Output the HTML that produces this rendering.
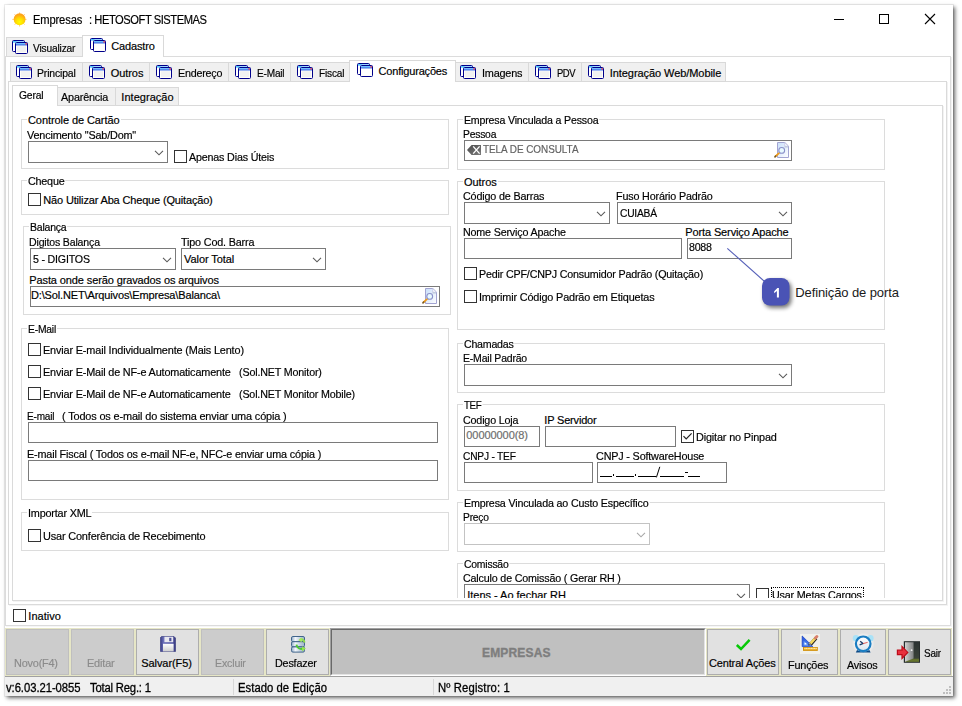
<!DOCTYPE html>
<html><head><meta charset="utf-8"><title>Empresas : HETOSOFT SISTEMAS</title>
<style>
html,body{margin:0;padding:0;background:#fff;}
body{width:962px;height:706px;position:relative;overflow:hidden;font-family:"Liberation Sans",sans-serif;}
.t{position:absolute;white-space:pre;font-family:"Liberation Sans",sans-serif;-webkit-text-stroke:.18px currentColor;}
#win{position:absolute;left:5px;top:5px;width:948px;height:691px;background:#fff;box-shadow:0 0 0 1px rgba(0,0,0,.06),2px 2px 4px rgba(0,0,0,.6);}
#clip{position:absolute;left:0;top:0;width:962px;height:598px;overflow:hidden;}
.tab{position:absolute;box-sizing:border-box;border:1px solid #d9d9d9;background:#f0f0f0;}
.tab.sel{background:#fff;border-bottom:none;}
.pane{position:absolute;box-sizing:border-box;border:1px solid #dadada;background:#fff;}
.btn{position:absolute;box-sizing:border-box;border:1px solid #adadad;background:#e1e1e1;}
.btn.dis{border-color:#bfbfbf;background:#cccccc;}
</style></head><body>
<div id="win"></div>

<svg style="position:absolute;left:11px;top:11px" width="17" height="17" viewBox="0 0 17 17">
<defs><radialGradient id="sun" cx=".5" cy=".72" r=".62"><stop offset="0" stop-color="#ffff00"/><stop offset=".45" stop-color="#ffe000"/><stop offset="1" stop-color="#ffa31a"/></radialGradient></defs>
<g stroke="#ffab2e" stroke-width="1" stroke-linecap="round" opacity=".55">
<path d="M8.6 1.7 V2.6 M8.6 14.4 V15.2 M1.6 8.4 H2.4 M14.6 8.4 H15.2 M3.7 3.5 L4.3 4.1 M12.9 12.8 L13.4 13.3 M13.6 3.4 L13 4 M4.4 12.9 L3.9 13.5"/></g>
<circle cx="8.6" cy="8.3" r="5.95" fill="url(#sun)"/>
</svg>
<span id="t1" class="t " style="left:33px;top:13px;font-size:12px;line-height:14px;color:#000;letter-spacing:-0.146px;transform:scaleX(0.9300);transform-origin:0 0;">Empresas</span>
<span id="t2" class="t " style="left:89px;top:13px;font-size:12px;line-height:14px;color:#000;letter-spacing:-0.484px;transform:scaleX(0.9300);transform-origin:0 0;">: HETOSOFT SISTEMAS</span>
<svg style="position:absolute;left:830px;top:10px" width="115" height="20" viewBox="0 0 115 20">
<path d="M4 9.5 H14" stroke="#000" stroke-width="1"/>
<rect x="49.5" y="4.5" width="9" height="9" fill="none" stroke="#000" stroke-width="1"/>
<path d="M95 4 L105 14 M105 4 L95 14" stroke="#000" stroke-width="1.1"/>
</svg>
<div class="pane" style="left:5px;top:56px;width:946px;height:570px;border-color:#dcdcdc"></div>
<div style="position:absolute;left:951px;top:57px;width:1px;height:569px;background:#f2f2f2"></div>
<div class="tab" style="left:6px;top:37px;width:77px;height:20px;"></div>
<div class="tab sel" style="left:82px;top:35px;width:82px;height:22px;"></div>
<svg style="position:absolute;left:12px;top:40px" width="16" height="14" viewBox="0 0 16 14">
<rect x=".5" y=".5" width="12" height="11" rx="1" fill="#ffffff" stroke="#00008b"/>
<rect x="1" y="1" width="11" height="1.5" fill="#9fd6ff"/>
<rect x="1" y="1" width="3.5" height="1.5" fill="#52c8ff"/>
<rect x="3.5" y="2.5" width="12" height="11" rx="1" fill="#fffef8" stroke="#00008b"/>
<rect x="4" y="3" width="11" height="1.2" fill="#6ec2ff"/>
<rect x="4" y="4.2" width="11" height="1.2" fill="#2f6cea"/>
<rect x="4" y="5.4" width="11" height=".5" fill="#8eaaf2"/>
<rect x="13.4" y="3.1" width="1.5" height="1.5" fill="#f0384c"/>
<rect x="5" y="6.2" width="9" height="5.8" fill="#f1f1f1"/>
</svg>
<span id="t3" class="t " style="left:33.3px;top:42px;font-size:11px;line-height:13px;color:#000;letter-spacing:-0.171px;transform:scaleX(0.9247);transform-origin:0 0;">Visualizar</span>
<svg style="position:absolute;left:90px;top:38px" width="16" height="14" viewBox="0 0 16 14">
<rect x=".5" y=".5" width="12" height="11" rx="1" fill="#ffffff" stroke="#00008b"/>
<rect x="1" y="1" width="11" height="1.5" fill="#9fd6ff"/>
<rect x="1" y="1" width="3.5" height="1.5" fill="#52c8ff"/>
<rect x="3.5" y="2.5" width="12" height="11" rx="1" fill="#fffef8" stroke="#00008b"/>
<rect x="4" y="3" width="11" height="1.2" fill="#6ec2ff"/>
<rect x="4" y="4.2" width="11" height="1.2" fill="#2f6cea"/>
<rect x="4" y="5.4" width="11" height=".5" fill="#8eaaf2"/>
<rect x="13.4" y="3.1" width="1.5" height="1.5" fill="#f0384c"/>
<rect x="5" y="6.2" width="9" height="5.8" fill="#ffffff"/>
</svg>
<span id="t4" class="t " style="left:111.3px;top:40px;font-size:11px;line-height:13px;color:#000;letter-spacing:-0.163px;">Cadastro</span>
<div class="pane" style="left:8px;top:81px;width:939px;height:524px;"></div>
<div style="position:absolute;left:947px;top:82px;width:1px;height:523px;background:#f2f2f2"></div>
<div class="tab" style="left:10px;top:62px;width:73px;height:20px;"></div>
<svg style="position:absolute;left:16px;top:65px" width="16" height="14" viewBox="0 0 16 14">
<rect x=".5" y=".5" width="12" height="11" rx="1" fill="#ffffff" stroke="#00008b"/>
<rect x="1" y="1" width="11" height="1.5" fill="#9fd6ff"/>
<rect x="1" y="1" width="3.5" height="1.5" fill="#52c8ff"/>
<rect x="3.5" y="2.5" width="12" height="11" rx="1" fill="#fffef8" stroke="#00008b"/>
<rect x="4" y="3" width="11" height="1.2" fill="#6ec2ff"/>
<rect x="4" y="4.2" width="11" height="1.2" fill="#2f6cea"/>
<rect x="4" y="5.4" width="11" height=".5" fill="#8eaaf2"/>
<rect x="13.4" y="3.1" width="1.5" height="1.5" fill="#f0384c"/>
<rect x="5" y="6.2" width="9" height="5.8" fill="#f1f1f1"/>
</svg>
<span id="t5" class="t " style="left:37.3px;top:67px;font-size:11px;line-height:13px;color:#000;letter-spacing:-0.167px;transform:scaleX(0.9497);transform-origin:0 0;">Principal</span>
<div class="tab" style="left:82px;top:62px;width:68px;height:20px;"></div>
<svg style="position:absolute;left:89px;top:65px" width="16" height="14" viewBox="0 0 16 14">
<rect x=".5" y=".5" width="12" height="11" rx="1" fill="#ffffff" stroke="#00008b"/>
<rect x="1" y="1" width="11" height="1.5" fill="#9fd6ff"/>
<rect x="1" y="1" width="3.5" height="1.5" fill="#52c8ff"/>
<rect x="3.5" y="2.5" width="12" height="11" rx="1" fill="#fffef8" stroke="#00008b"/>
<rect x="4" y="3" width="11" height="1.2" fill="#6ec2ff"/>
<rect x="4" y="4.2" width="11" height="1.2" fill="#2f6cea"/>
<rect x="4" y="5.4" width="11" height=".5" fill="#8eaaf2"/>
<rect x="13.4" y="3.1" width="1.5" height="1.5" fill="#f0384c"/>
<rect x="5" y="6.2" width="9" height="5.8" fill="#f1f1f1"/>
</svg>
<span id="t6" class="t " style="left:110.8px;top:67px;font-size:11px;line-height:13px;color:#000;letter-spacing:-0.083px;">Outros</span>
<div class="tab" style="left:149px;top:62px;width:80px;height:20px;"></div>
<svg style="position:absolute;left:156px;top:65px" width="16" height="14" viewBox="0 0 16 14">
<rect x=".5" y=".5" width="12" height="11" rx="1" fill="#ffffff" stroke="#00008b"/>
<rect x="1" y="1" width="11" height="1.5" fill="#9fd6ff"/>
<rect x="1" y="1" width="3.5" height="1.5" fill="#52c8ff"/>
<rect x="3.5" y="2.5" width="12" height="11" rx="1" fill="#fffef8" stroke="#00008b"/>
<rect x="4" y="3" width="11" height="1.2" fill="#6ec2ff"/>
<rect x="4" y="4.2" width="11" height="1.2" fill="#2f6cea"/>
<rect x="4" y="5.4" width="11" height=".5" fill="#8eaaf2"/>
<rect x="13.4" y="3.1" width="1.5" height="1.5" fill="#f0384c"/>
<rect x="5" y="6.2" width="9" height="5.8" fill="#f1f1f1"/>
</svg>
<span id="t7" class="t " style="left:177.8px;top:67px;font-size:11px;line-height:13px;color:#000;letter-spacing:-0.207px;transform:scaleX(0.9749);transform-origin:0 0;">Endereço</span>
<div class="tab" style="left:228px;top:62px;width:63px;height:20px;"></div>
<svg style="position:absolute;left:235px;top:65px" width="16" height="14" viewBox="0 0 16 14">
<rect x=".5" y=".5" width="12" height="11" rx="1" fill="#ffffff" stroke="#00008b"/>
<rect x="1" y="1" width="11" height="1.5" fill="#9fd6ff"/>
<rect x="1" y="1" width="3.5" height="1.5" fill="#52c8ff"/>
<rect x="3.5" y="2.5" width="12" height="11" rx="1" fill="#fffef8" stroke="#00008b"/>
<rect x="4" y="3" width="11" height="1.2" fill="#6ec2ff"/>
<rect x="4" y="4.2" width="11" height="1.2" fill="#2f6cea"/>
<rect x="4" y="5.4" width="11" height=".5" fill="#8eaaf2"/>
<rect x="13.4" y="3.1" width="1.5" height="1.5" fill="#f0384c"/>
<rect x="5" y="6.2" width="9" height="5.8" fill="#f1f1f1"/>
</svg>
<span id="t8" class="t " style="left:256.5px;top:67px;font-size:11px;line-height:13px;color:#000;letter-spacing:-0.204px;transform:scaleX(0.9154);transform-origin:0 0;">E-Mail</span>
<div class="tab" style="left:290px;top:62px;width:62px;height:20px;"></div>
<svg style="position:absolute;left:297px;top:65px" width="16" height="14" viewBox="0 0 16 14">
<rect x=".5" y=".5" width="12" height="11" rx="1" fill="#ffffff" stroke="#00008b"/>
<rect x="1" y="1" width="11" height="1.5" fill="#9fd6ff"/>
<rect x="1" y="1" width="3.5" height="1.5" fill="#52c8ff"/>
<rect x="3.5" y="2.5" width="12" height="11" rx="1" fill="#fffef8" stroke="#00008b"/>
<rect x="4" y="3" width="11" height="1.2" fill="#6ec2ff"/>
<rect x="4" y="4.2" width="11" height="1.2" fill="#2f6cea"/>
<rect x="4" y="5.4" width="11" height=".5" fill="#8eaaf2"/>
<rect x="13.4" y="3.1" width="1.5" height="1.5" fill="#f0384c"/>
<rect x="5" y="6.2" width="9" height="5.8" fill="#f1f1f1"/>
</svg>
<span id="t9" class="t " style="left:318.6px;top:67px;font-size:11px;line-height:13px;color:#000;letter-spacing:-0.188px;transform:scaleX(0.9174);transform-origin:0 0;">Fiscal</span>
<div class="tab" style="left:453px;top:62px;width:76px;height:20px;"></div>
<svg style="position:absolute;left:460px;top:65px" width="16" height="14" viewBox="0 0 16 14">
<rect x=".5" y=".5" width="12" height="11" rx="1" fill="#ffffff" stroke="#00008b"/>
<rect x="1" y="1" width="11" height="1.5" fill="#9fd6ff"/>
<rect x="1" y="1" width="3.5" height="1.5" fill="#52c8ff"/>
<rect x="3.5" y="2.5" width="12" height="11" rx="1" fill="#fffef8" stroke="#00008b"/>
<rect x="4" y="3" width="11" height="1.2" fill="#6ec2ff"/>
<rect x="4" y="4.2" width="11" height="1.2" fill="#2f6cea"/>
<rect x="4" y="5.4" width="11" height=".5" fill="#8eaaf2"/>
<rect x="13.4" y="3.1" width="1.5" height="1.5" fill="#f0384c"/>
<rect x="5" y="6.2" width="9" height="5.8" fill="#f1f1f1"/>
</svg>
<span id="t10" class="t " style="left:481.8px;top:67px;font-size:11px;line-height:13px;color:#000;letter-spacing:-0.213px;transform:scaleX(0.9896);transform-origin:0 0;">Imagens</span>
<div class="tab" style="left:528px;top:62px;width:54px;height:20px;"></div>
<svg style="position:absolute;left:535px;top:65px" width="16" height="14" viewBox="0 0 16 14">
<rect x=".5" y=".5" width="12" height="11" rx="1" fill="#ffffff" stroke="#00008b"/>
<rect x="1" y="1" width="11" height="1.5" fill="#9fd6ff"/>
<rect x="1" y="1" width="3.5" height="1.5" fill="#52c8ff"/>
<rect x="3.5" y="2.5" width="12" height="11" rx="1" fill="#fffef8" stroke="#00008b"/>
<rect x="4" y="3" width="11" height="1.2" fill="#6ec2ff"/>
<rect x="4" y="4.2" width="11" height="1.2" fill="#2f6cea"/>
<rect x="4" y="5.4" width="11" height=".5" fill="#8eaaf2"/>
<rect x="13.4" y="3.1" width="1.5" height="1.5" fill="#f0384c"/>
<rect x="5" y="6.2" width="9" height="5.8" fill="#f1f1f1"/>
</svg>
<span id="t11" class="t " style="left:556.6999999999999px;top:67px;font-size:11px;line-height:13px;color:#000;letter-spacing:-0.557px;transform:scaleX(0.8600);transform-origin:0 0;">PDV</span>
<div class="tab" style="left:581px;top:62px;width:145px;height:20px;"></div>
<svg style="position:absolute;left:588px;top:65px" width="16" height="14" viewBox="0 0 16 14">
<rect x=".5" y=".5" width="12" height="11" rx="1" fill="#ffffff" stroke="#00008b"/>
<rect x="1" y="1" width="11" height="1.5" fill="#9fd6ff"/>
<rect x="1" y="1" width="3.5" height="1.5" fill="#52c8ff"/>
<rect x="3.5" y="2.5" width="12" height="11" rx="1" fill="#fffef8" stroke="#00008b"/>
<rect x="4" y="3" width="11" height="1.2" fill="#6ec2ff"/>
<rect x="4" y="4.2" width="11" height="1.2" fill="#2f6cea"/>
<rect x="4" y="5.4" width="11" height=".5" fill="#8eaaf2"/>
<rect x="13.4" y="3.1" width="1.5" height="1.5" fill="#f0384c"/>
<rect x="5" y="6.2" width="9" height="5.8" fill="#f1f1f1"/>
</svg>
<span id="t12" class="t " style="left:609.8px;top:67px;font-size:11px;line-height:13px;color:#000;letter-spacing:-0.071px;">Integração Web/Mobile</span>
<div class="tab sel" style="left:349px;top:60px;width:107px;height:22px;"></div>
<svg style="position:absolute;left:357px;top:63px" width="16" height="14" viewBox="0 0 16 14">
<rect x=".5" y=".5" width="12" height="11" rx="1" fill="#ffffff" stroke="#00008b"/>
<rect x="1" y="1" width="11" height="1.5" fill="#9fd6ff"/>
<rect x="1" y="1" width="3.5" height="1.5" fill="#52c8ff"/>
<rect x="3.5" y="2.5" width="12" height="11" rx="1" fill="#fffef8" stroke="#00008b"/>
<rect x="4" y="3" width="11" height="1.2" fill="#6ec2ff"/>
<rect x="4" y="4.2" width="11" height="1.2" fill="#2f6cea"/>
<rect x="4" y="5.4" width="11" height=".5" fill="#8eaaf2"/>
<rect x="13.4" y="3.1" width="1.5" height="1.5" fill="#f0384c"/>
<rect x="5" y="6.2" width="9" height="5.8" fill="#ffffff"/>
</svg>
<span id="t13" class="t " style="left:378.6px;top:65px;font-size:11px;line-height:13px;color:#000;letter-spacing:-0.186px;">Configurações</span>
<div class="pane" style="left:12px;top:105px;width:931px;height:496px;"></div>
<div style="position:absolute;left:943px;top:106px;width:1px;height:495px;background:#f2f2f2"></div>
<div class="tab" style="left:57px;top:87px;width:59px;height:19px;"></div>
<div class="tab" style="left:115px;top:87px;width:64px;height:19px;"></div>
<div class="tab sel" style="left:12px;top:85px;width:46px;height:21px;"></div>
<span id="t14" class="t " style="left:19.3px;top:89px;font-size:11px;line-height:13px;color:#000;letter-spacing:-0.215px;transform:scaleX(0.9406);transform-origin:0 0;">Geral</span>
<span id="t15" class="t " style="left:61.3px;top:91px;font-size:11px;line-height:13px;color:#000;letter-spacing:-0.189px;transform:scaleX(0.9847);transform-origin:0 0;">Aparência</span>
<span id="t16" class="t " style="left:121.3px;top:91px;font-size:11px;line-height:13px;color:#000;letter-spacing:0.035px;">Integração</span>
<div style="position:absolute;left:13px;top:601px;width:931px;height:1px;background:#f4f4f4;"></div>
<div style="position:absolute;left:9px;top:605px;width:939px;height:1px;background:#f4f4f4;"></div>
<div style="position:absolute;left:6px;top:626px;width:946px;height:1px;background:#f6f6f6;"></div>
<div id="clip">
<div style="position:absolute;left:21px;top:119px;width:426px;height:48px;border:1px solid #dcdcdc;"></div>
<span id="t17" class="t " style="left:28.0px;top:114px;font-size:11px;line-height:13px;color:#000;letter-spacing:-0.080px;background:#fff;padding:0 1px 0 1px;margin-left:-1px;">Controle de Cartão</span>
<span id="t18" class="t " style="left:27.3px;top:129px;font-size:11px;line-height:13px;color:#000;letter-spacing:-0.183px;transform:scaleX(0.9862);transform-origin:0 0;">Vencimento &quot;Sab/Dom&quot;</span>
<div style="position:absolute;left:28px;top:141px;width:138px;height:20px;border:1px solid #7a7a7a;background:#fff;"><svg width="10" height="6" viewBox="0 0 10 6" style="position:absolute;right:3px;top:8px"><path d="M1 .8 L5 4.8 L9 .8" fill="none" stroke="#5a5a5a" stroke-width="1.1"/></svg></div>
<div style="position:absolute;left:174px;top:150px;width:11px;height:11px;border:1px solid #333;background:#fff;"></div>
<span id="t19" class="t " style="left:189.3px;top:151px;font-size:11px;line-height:13px;color:#000;letter-spacing:-0.174px;transform:scaleX(0.9736);transform-origin:0 0;">Apenas Dias Úteis</span>
<div style="position:absolute;left:21px;top:180px;width:426px;height:33px;border:1px solid #dcdcdc;"></div>
<span id="t20" class="t " style="left:28.0px;top:175px;font-size:11px;line-height:13px;color:#000;letter-spacing:-0.235px;transform:scaleX(0.9821);transform-origin:0 0;background:#fff;padding:0 1px 0 1px;margin-left:-1px;">Cheque</span>
<div style="position:absolute;left:28px;top:193px;width:11px;height:11px;border:1px solid #333;background:#fff;"></div>
<span id="t21" class="t " style="left:43.3px;top:194px;font-size:11px;line-height:13px;color:#000;letter-spacing:-0.163px;">Não Utilizar Aba Cheque (Quitação)</span>
<div style="position:absolute;left:23px;top:226px;width:426px;height:87px;border:1px solid #dcdcdc;"></div>
<span id="t22" class="t " style="left:30.0px;top:221px;font-size:11px;line-height:13px;color:#000;letter-spacing:-0.209px;transform:scaleX(0.9529);transform-origin:0 0;background:#fff;padding:0 1px 0 1px;margin-left:-1px;">Balança</span>
<span id="t23" class="t " style="left:29.3px;top:236px;font-size:11px;line-height:13px;color:#000;letter-spacing:-0.171px;transform:scaleX(0.9589);transform-origin:0 0;">Digitos Balança</span>
<div style="position:absolute;left:30px;top:248px;width:144px;height:20px;border:1px solid #7a7a7a;background:#fff;"><svg width="10" height="6" viewBox="0 0 10 6" style="position:absolute;right:3px;top:8px"><path d="M1 .8 L5 4.8 L9 .8" fill="none" stroke="#5a5a5a" stroke-width="1.1"/></svg></div>
<span id="t24" class="t " style="left:33.3px;top:253px;font-size:11px;line-height:13px;color:#000;letter-spacing:-0.189px;transform:scaleX(0.9656);transform-origin:0 0;">5 - DIGITOS</span>
<span id="t25" class="t " style="left:180.8px;top:236px;font-size:11px;line-height:13px;color:#000;letter-spacing:-0.169px;transform:scaleX(0.9815);transform-origin:0 0;">Tipo Cod. Barra</span>
<div style="position:absolute;left:181px;top:248px;width:143px;height:20px;border:1px solid #7a7a7a;background:#fff;"><svg width="10" height="6" viewBox="0 0 10 6" style="position:absolute;right:3px;top:8px"><path d="M1 .8 L5 4.8 L9 .8" fill="none" stroke="#5a5a5a" stroke-width="1.1"/></svg></div>
<span id="t26" class="t " style="left:184.0px;top:253px;font-size:11px;line-height:13px;color:#000;letter-spacing:-0.067px;">Valor Total</span>
<span id="t27" class="t " style="left:29.3px;top:274px;font-size:11px;line-height:13px;color:#000;letter-spacing:-0.115px;">Pasta onde serão gravados os arquivos</span>
<div style="position:absolute;left:30px;top:286px;width:408px;height:19px;border:1px solid #7a7a7a;background:#fff;"></div>
<span id="t28" class="t " style="left:30.900000000000002px;top:289px;font-size:11px;line-height:13px;color:#000;letter-spacing:-0.132px;">D:\Sol.NET\Arquivos\Empresa\Balanca\</span>
<svg style="position:absolute;left:422px;top:288px" width="16" height="17" viewBox="0 0 16 17">
<defs><linearGradient id="pg" x1="0" y1="0" x2="1" y2="1"><stop offset="0" stop-color="#c9e0fb"/><stop offset=".55" stop-color="#e6effc"/><stop offset="1" stop-color="#ffffff"/></linearGradient>
<linearGradient id="fd" x1="0" y1="0" x2="0" y2="1"><stop offset="0" stop-color="#9fb0c0"/><stop offset="1" stop-color="#e6effc" stop-opacity="0"/></linearGradient></defs>
<path d="M3.5 .5 H10.8 L14.5 4.2 V15.5 H3.5 Z" fill="url(#pg)" stroke="#a2a4d2" stroke-width="1"/>
<rect x="10.6" y="4.4" width="3.4" height="2.4" fill="url(#fd)"/>
<path d="M10.8 .6 V4.2 H14.4 Z" fill="#ffffff" stroke="#b4b6dc" stroke-width=".6"/>
<circle cx="7.7" cy="8.4" r="2.9" fill="#e9fbff" fill-opacity=".85" stroke="#8a90c9" stroke-width="1.1"/>
<path d="M5.3 10.9 L1.4 14.4" stroke="#f19a16" stroke-width="1.9" stroke-linecap="butt"/>
<path d="M1.6 14.2 L1 14.8" stroke="#7b5a1e" stroke-width="1.7" stroke-linecap="round"/>
</svg>
<div style="position:absolute;left:21px;top:328px;width:426px;height:170px;border:1px solid #dcdcdc;"></div>
<span id="t29" class="t " style="left:28.0px;top:323px;font-size:11px;line-height:13px;color:#000;letter-spacing:-0.199px;transform:scaleX(0.9379);transform-origin:0 0;background:#fff;padding:0 1px 0 1px;margin-left:-1px;">E-Mail</span>
<div style="position:absolute;left:28px;top:343px;width:11px;height:11px;border:1px solid #333;background:#fff;"></div>
<span id="t30" class="t " style="left:43.3px;top:344px;font-size:11px;line-height:13px;color:#000;letter-spacing:-0.155px;transform:scaleX(0.9885);transform-origin:0 0;">Enviar E-mail Individualmente (Mais Lento)</span>
<div style="position:absolute;left:28px;top:365px;width:11px;height:11px;border:1px solid #333;background:#fff;"></div>
<span id="t31" class="t " style="left:43.3px;top:366px;font-size:11px;line-height:13px;color:#000;letter-spacing:-0.166px;transform:scaleX(0.9869);transform-origin:0 0;">Enviar E-Mail de NF-e Automaticamente</span>
<span id="t32" class="t " style="left:238.70000000000002px;top:366px;font-size:11px;line-height:13px;color:#000;letter-spacing:-0.169px;transform:scaleX(0.9739);transform-origin:0 0;">(Sol.NET Monitor)</span>
<div style="position:absolute;left:28px;top:387px;width:11px;height:11px;border:1px solid #333;background:#fff;"></div>
<span id="t33" class="t " style="left:43.3px;top:388px;font-size:11px;line-height:13px;color:#000;letter-spacing:-0.166px;transform:scaleX(0.9869);transform-origin:0 0;">Enviar E-Mail de NF-e Automaticamente</span>
<span id="t34" class="t " style="left:238.70000000000002px;top:388px;font-size:11px;line-height:13px;color:#000;letter-spacing:-0.165px;transform:scaleX(0.9717);transform-origin:0 0;">(Sol.NET Monitor Mobile)</span>
<span id="t35" class="t " style="left:27.3px;top:410px;font-size:11px;line-height:13px;color:#000;letter-spacing:-0.205px;transform:scaleX(0.9122);transform-origin:0 0;">E-mail</span>
<span id="t36" class="t " style="left:62.0px;top:410px;font-size:11px;line-height:13px;color:#000;letter-spacing:-0.153px;transform:scaleX(0.9930);transform-origin:0 0;">( Todos os e-mail do sistema enviar uma cópia )</span>
<div style="position:absolute;left:28px;top:422px;width:408px;height:19px;border:1px solid #7a7a7a;background:#fff;"></div>
<span id="t37" class="t " style="left:27.3px;top:448px;font-size:11px;line-height:13px;color:#000;letter-spacing:-0.155px;transform:scaleX(0.9821);transform-origin:0 0;">E-mail Fiscal ( Todos os e-mail NF-e, NFC-e enviar uma cópia )</span>
<div style="position:absolute;left:28px;top:460px;width:408px;height:19px;border:1px solid #7a7a7a;background:#fff;"></div>
<div style="position:absolute;left:21px;top:512px;width:426px;height:37px;border:1px solid #dcdcdc;"></div>
<span id="t38" class="t " style="left:28.0px;top:507px;font-size:11px;line-height:13px;color:#000;letter-spacing:-0.185px;transform:scaleX(0.9844);transform-origin:0 0;background:#fff;padding:0 1px 0 1px;margin-left:-1px;">Importar XML</span>
<div style="position:absolute;left:28px;top:529px;width:11px;height:11px;border:1px solid #333;background:#fff;"></div>
<span id="t39" class="t " style="left:43.3px;top:530px;font-size:11px;line-height:13px;color:#000;letter-spacing:-0.170px;transform:scaleX(0.9929);transform-origin:0 0;">Usar Conferência de Recebimento</span>
<div style="position:absolute;left:457px;top:119px;width:426px;height:49px;border:1px solid #dcdcdc;"></div>
<span id="t40" class="t " style="left:464.0px;top:114px;font-size:11px;line-height:13px;color:#000;letter-spacing:-0.179px;transform:scaleX(0.9640);transform-origin:0 0;background:#fff;padding:0 1px 0 1px;margin-left:-1px;">Empresa Vinculada a Pessoa</span>
<span id="t41" class="t " style="left:463.3px;top:128px;font-size:11px;line-height:13px;color:#000;letter-spacing:-0.234px;transform:scaleX(0.9400);transform-origin:0 0;">Pessoa</span>
<div style="position:absolute;left:464px;top:140px;width:326px;height:19px;border:1px solid #7a7a7a;background:#fff;"></div>
<svg style="position:absolute;left:467px;top:145px" width="14" height="10" viewBox="0 0 14 10">
<defs><linearGradient id="bk" x1="0" y1="0" x2="1" y2="1"><stop offset="0" stop-color="#4a4a4a"/><stop offset="1" stop-color="#7c7c7c"/></linearGradient></defs><path d="M4.6 0 H14 V10 H4.6 L0 5 Z" fill="url(#bk)"/><path d="M6.2 1.4 L12.6 8.6 M12.6 1.4 L6.2 8.6" stroke="#fff" stroke-width="1.35"/></svg>
<span id="t42" class="t " style="left:483.1px;top:143px;font-size:11px;line-height:13px;color:#626262;letter-spacing:-0.030px;transform:scaleX(0.9000);transform-origin:0 0;">TELA DE CONSULTA</span>
<svg style="position:absolute;left:774px;top:142px" width="16" height="17" viewBox="0 0 16 17">
<defs><linearGradient id="pg" x1="0" y1="0" x2="1" y2="1"><stop offset="0" stop-color="#c9e0fb"/><stop offset=".55" stop-color="#e6effc"/><stop offset="1" stop-color="#ffffff"/></linearGradient>
<linearGradient id="fd" x1="0" y1="0" x2="0" y2="1"><stop offset="0" stop-color="#9fb0c0"/><stop offset="1" stop-color="#e6effc" stop-opacity="0"/></linearGradient></defs>
<path d="M3.5 .5 H10.8 L14.5 4.2 V15.5 H3.5 Z" fill="url(#pg)" stroke="#a2a4d2" stroke-width="1"/>
<rect x="10.6" y="4.4" width="3.4" height="2.4" fill="url(#fd)"/>
<path d="M10.8 .6 V4.2 H14.4 Z" fill="#ffffff" stroke="#b4b6dc" stroke-width=".6"/>
<circle cx="7.7" cy="8.4" r="2.9" fill="#e9fbff" fill-opacity=".85" stroke="#8a90c9" stroke-width="1.1"/>
<path d="M5.3 10.9 L1.4 14.4" stroke="#f19a16" stroke-width="1.9" stroke-linecap="butt"/>
<path d="M1.6 14.2 L1 14.8" stroke="#7b5a1e" stroke-width="1.7" stroke-linecap="round"/>
</svg>
<div style="position:absolute;left:457px;top:181px;width:426px;height:147px;border:1px solid #dcdcdc;"></div>
<span id="t43" class="t " style="left:464.0px;top:176px;font-size:11px;line-height:13px;color:#000;letter-spacing:-0.063px;background:#fff;padding:0 1px 0 1px;margin-left:-1px;">Outros</span>
<span id="t44" class="t " style="left:463.3px;top:190px;font-size:11px;line-height:13px;color:#000;letter-spacing:-0.175px;transform:scaleX(0.9808);transform-origin:0 0;">Código de Barras</span>
<div style="position:absolute;left:464px;top:202px;width:144px;height:20px;border:1px solid #7a7a7a;background:#fff;"><svg width="10" height="6" viewBox="0 0 10 6" style="position:absolute;right:3px;top:8px"><path d="M1 .8 L5 4.8 L9 .8" fill="none" stroke="#5a5a5a" stroke-width="1.1"/></svg></div>
<span id="t45" class="t " style="left:616.3px;top:190px;font-size:11px;line-height:13px;color:#000;letter-spacing:-0.174px;transform:scaleX(0.9780);transform-origin:0 0;">Fuso Horário Padrão</span>
<div style="position:absolute;left:617px;top:202px;width:173px;height:20px;border:1px solid #7a7a7a;background:#fff;"><svg width="10" height="6" viewBox="0 0 10 6" style="position:absolute;right:3px;top:8px"><path d="M1 .8 L5 4.8 L9 .8" fill="none" stroke="#5a5a5a" stroke-width="1.1"/></svg></div>
<span id="t46" class="t " style="left:620.3px;top:207px;font-size:11px;line-height:13px;color:#000;letter-spacing:-0.263px;transform:scaleX(0.9331);transform-origin:0 0;">CUIABÁ</span>
<span id="t47" class="t " style="left:463.3px;top:226px;font-size:11px;line-height:13px;color:#000;letter-spacing:-0.186px;transform:scaleX(0.9754);transform-origin:0 0;">Nome Serviço Apache</span>
<div style="position:absolute;left:464px;top:238px;width:216px;height:19px;border:1px solid #7a7a7a;background:#fff;"></div>
<span id="t48" class="t " style="left:685.3px;top:226px;font-size:11px;line-height:13px;color:#000;letter-spacing:-0.126px;">Porta Serviço Apache</span>
<div style="position:absolute;left:687px;top:238px;width:103px;height:19px;border:1px solid #7a7a7a;background:#fff;"></div>
<span id="t49" class="t " style="left:689.3px;top:241px;font-size:11px;line-height:13px;color:#000;letter-spacing:-0.253px;transform:scaleX(0.9694);transform-origin:0 0;">8088</span>
<div style="position:absolute;left:464px;top:267px;width:11px;height:11px;border:1px solid #333;background:#fff;"></div>
<span id="t50" class="t " style="left:479.3px;top:268px;font-size:11px;line-height:13px;color:#000;letter-spacing:-0.175px;transform:scaleX(0.9728);transform-origin:0 0;">Pedir CPF/CNPJ Consumidor Padrão (Quitação)</span>
<div style="position:absolute;left:464px;top:290px;width:11px;height:11px;border:1px solid #333;background:#fff;"></div>
<span id="t51" class="t " style="left:479.3px;top:291px;font-size:11px;line-height:13px;color:#000;letter-spacing:-0.164px;transform:scaleX(0.9874);transform-origin:0 0;">Imprimir Código Padrão em Etiquetas</span>
<div style="position:absolute;left:457px;top:343px;width:426px;height:48px;border:1px solid #dcdcdc;"></div>
<span id="t52" class="t " style="left:464.0px;top:338px;font-size:11px;line-height:13px;color:#000;letter-spacing:-0.236px;transform:scaleX(0.9660);transform-origin:0 0;background:#fff;padding:0 1px 0 1px;margin-left:-1px;">Chamadas</span>
<span id="t53" class="t " style="left:463.3px;top:352px;font-size:11px;line-height:13px;color:#000;letter-spacing:-0.183px;transform:scaleX(0.9510);transform-origin:0 0;">E-Mail Padrão</span>
<div style="position:absolute;left:464px;top:364px;width:326px;height:20px;border:1px solid #7a7a7a;background:#fff;"><svg width="10" height="6" viewBox="0 0 10 6" style="position:absolute;right:3px;top:8px"><path d="M1 .8 L5 4.8 L9 .8" fill="none" stroke="#5a5a5a" stroke-width="1.1"/></svg></div>
<div style="position:absolute;left:457px;top:404px;width:426px;height:85px;border:1px solid #dcdcdc;"></div>
<span id="t54" class="t " style="left:464.0px;top:399px;font-size:11px;line-height:13px;color:#000;letter-spacing:-0.352px;transform:scaleX(0.8865);transform-origin:0 0;background:#fff;padding:0 1px 0 1px;margin-left:-1px;">TEF</span>
<span id="t55" class="t " style="left:463.3px;top:414px;font-size:11px;line-height:13px;color:#000;letter-spacing:-0.181px;transform:scaleX(0.9752);transform-origin:0 0;">Codigo Loja</span>
<div style="position:absolute;left:464px;top:426px;width:74px;height:19px;border:1px solid #7a7a7a;background:#fff;"></div>
<span id="t56" class="t " style="left:466.3px;top:429px;font-size:11px;line-height:13px;color:#6d6d6d;letter-spacing:-0.069px;">00000000(8)</span>
<span id="t57" class="t " style="left:544.3px;top:414px;font-size:11px;line-height:13px;color:#000;letter-spacing:-0.182px;">IP Servidor</span>
<div style="position:absolute;left:545px;top:426px;width:129px;height:19px;border:1px solid #7a7a7a;background:#fff;"></div>
<div style="position:absolute;left:681px;top:430px;width:11px;height:11px;border:1px solid #333;background:#fff;"><svg width="11" height="11" viewBox="0 0 11 11" style="position:absolute;left:0;top:0"><path d="M1.5 5.2 L4.2 8 L9.6 2.4" fill="none" stroke="#222" stroke-width="1.2"/></svg></div>
<span id="t58" class="t " style="left:696.3px;top:431px;font-size:11px;line-height:13px;color:#000;letter-spacing:-0.160px;transform:scaleX(0.9886);transform-origin:0 0;">Digitar no Pinpad</span>
<span id="t59" class="t " style="left:463.3px;top:450px;font-size:11px;line-height:13px;color:#000;letter-spacing:-0.213px;transform:scaleX(0.9254);transform-origin:0 0;">CNPJ - TEF</span>
<div style="position:absolute;left:464px;top:462px;width:127px;height:19px;border:1px solid #7a7a7a;background:#fff;"></div>
<span id="t60" class="t " style="left:596.3px;top:450px;font-size:11px;line-height:13px;color:#000;letter-spacing:-0.183px;transform:scaleX(0.9832);transform-origin:0 0;">CNPJ - SoftwareHouse</span>
<div style="position:absolute;left:597px;top:462px;width:128px;height:19px;border:1px solid #7a7a7a;background:#fff;"></div>
<svg style="position:absolute;left:598px;top:464px" width="106" height="16" viewBox="598 464 106 16">
<g fill="#000" shape-rendering="crispEdges"><rect x="600" y="476" width="12" height="1"/><rect x="616" y="476" width="18" height="1"/><rect x="638" y="476" width="18" height="1"/><rect x="660" y="476" width="24" height="1"/><rect x="688" y="476" width="12" height="1"/>
<rect x="613" y="474" width="1" height="2"/><rect x="635" y="474" width="1" height="2"/><rect x="685" y="472" width="3" height="1"/></g>
<path d="M656.4 477.4 L659.8 466.8" stroke="#000" stroke-width="1" fill="none"/></svg>
<div style="position:absolute;left:457px;top:502px;width:426px;height:48px;border:1px solid #dcdcdc;"></div>
<span id="t61" class="t " style="left:464.0px;top:497px;font-size:11px;line-height:13px;color:#000;letter-spacing:-0.168px;transform:scaleX(0.9720);transform-origin:0 0;background:#fff;padding:0 1px 0 1px;margin-left:-1px;">Empresa Vinculada ao Custo Específico</span>
<span id="t62" class="t " style="left:463.3px;top:511px;font-size:11px;line-height:13px;color:#000;letter-spacing:-0.231px;transform:scaleX(0.9343);transform-origin:0 0;">Preço</span>
<div style="position:absolute;left:464px;top:523px;width:184px;height:20px;border:1px solid #c3c3c3;background:#fff;"><svg width="10" height="6" viewBox="0 0 10 6" style="position:absolute;right:3px;top:8px"><path d="M1 .8 L5 4.8 L9 .8" fill="none" stroke="#a8a8a8" stroke-width="1.1"/></svg></div>
<div style="position:absolute;left:457px;top:563px;width:426px;height:76px;border:1px solid #dcdcdc;"></div>
<span id="t63" class="t " style="left:464.0px;top:558px;font-size:11px;line-height:13px;color:#000;letter-spacing:-0.222px;transform:scaleX(0.9460);transform-origin:0 0;background:#fff;padding:0 1px 0 1px;margin-left:-1px;">Comissão</span>
<span id="t64" class="t " style="left:463.3px;top:572px;font-size:11px;line-height:13px;color:#000;letter-spacing:-0.167px;transform:scaleX(0.9727);transform-origin:0 0;">Calculo de Comissão ( Gerar RH )</span>
<div style="position:absolute;left:464px;top:584px;width:284px;height:20px;border:1px solid #7a7a7a;background:#fff;"><svg width="10" height="6" viewBox="0 0 10 6" style="position:absolute;right:3px;top:8px"><path d="M1 .8 L5 4.8 L9 .8" fill="none" stroke="#5a5a5a" stroke-width="1.1"/></svg></div>
<span id="t65" class="t " style="left:467.3px;top:589px;font-size:11px;line-height:13px;color:#000;letter-spacing:-0.024px;">Itens - Ao fechar RH</span>
<div style="position:absolute;left:756px;top:588px;width:11px;height:11px;border:1px solid #333;background:#fff;"></div>
<div style="position:absolute;left:771px;top:587px;width:91px;height:16px;border:1px dotted #000;"></div>
<span id="t66" class="t " style="left:772.3px;top:589px;font-size:11px;line-height:13px;color:#000;letter-spacing:-0.182px;transform:scaleX(0.9787);transform-origin:0 0;">Usar Metas Cargos</span>
</div>
<svg style="position:absolute;left:720px;top:240px" width="90" height="80" viewBox="0 0 90 80">
<defs><filter id="sh" x="-40%" y="-40%" width="190%" height="190%"><feGaussianBlur stdDeviation="2"/></filter></defs>
<path d="M7.3 8.3 L45 42" stroke="#5660b9" stroke-width="1.1" fill="none"/>
<rect x="44" y="40.5" width="27.5" height="27.5" rx="8" fill="#000" opacity=".55" filter="url(#sh)"/>
<rect x="42" y="38" width="27.5" height="27.5" rx="8" fill="#4a53b5"/>
<path d="M54.2 51.2 L57.4 48 H58.9 V57.6 H56.9 V50.9 L54.2 53.3 Z" fill="#fff"/>
</svg>
<span id="t67" class="t " style="left:795.3px;top:285px;font-size:13px;line-height:15px;color:#1a1a1a;letter-spacing:-0.113px;-webkit-text-stroke:0;">Definição de porta</span>
<div style="position:absolute;left:13px;top:609px;width:11px;height:11px;border:1px solid #333;background:#fff;"></div>
<span id="t68" class="t " style="left:28.3px;top:610px;font-size:11px;line-height:13px;color:#000;letter-spacing:0.046px;">Inativo</span>
<div style="position:absolute;left:5px;top:628px;width:947px;height:48px;background:#e6e6c6;"></div>
<div style="position:absolute;left:5px;top:676px;width:948px;height:1px;background:#a0a0a0;"></div>
<div class="btn dis" style="left:6px;top:629px;width:63px;height:46px;"></div>
<span id="t69" class="t " style="left:14.3px;top:657px;font-size:11px;line-height:13px;color:#8b8b8b;letter-spacing:-0.199px;transform:scaleX(0.9898);transform-origin:0 0;">Novo(F4)</span>
<div class="btn dis" style="left:71px;top:629px;width:63px;height:46px;"></div>
<span id="t70" class="t " style="left:87.3px;top:657px;font-size:11px;line-height:13px;color:#8b8b8b;letter-spacing:-0.174px;transform:scaleX(0.9935);transform-origin:0 0;">Editar</span>
<div class="btn" style="left:136px;top:629px;width:63px;height:46px;"></div>
<span id="t71" class="t " style="left:141.3px;top:657px;font-size:11px;line-height:13px;color:#000;letter-spacing:-0.083px;">Salvar(F5)</span>
<div class="btn dis" style="left:201px;top:629px;width:63px;height:46px;"></div>
<span id="t72" class="t " style="left:215.3px;top:657px;font-size:11px;line-height:13px;color:#8b8b8b;letter-spacing:-0.171px;transform:scaleX(0.9659);transform-origin:0 0;">Excluir</span>
<div class="btn" style="left:266px;top:629px;width:63px;height:46px;"></div>
<span id="t73" class="t " style="left:275.3px;top:657px;font-size:11px;line-height:13px;color:#000;letter-spacing:-0.193px;transform:scaleX(0.9793);transform-origin:0 0;">Desfazer</span>
<div style="position:absolute;left:330px;top:628px;width:374px;height:46px;border:1px solid;border-color:#a0a0a0 #fff #fff #a0a0a0;"><div style="width:372px;height:44px;border:1px solid;border-color:#696969 #e3e3e3 #e3e3e3 #696969;background:#c0c0c0"></div></div>
<span id="t74" class="t " style="left:482px;top:646px;font-size:12px;line-height:14px;color:#7e7e7e;font-weight:bold;letter-spacing:0.163px;-webkit-text-stroke:.35px #7e7e7e;">EMPRESAS</span>
<div class="btn" style="left:707px;top:629px;width:72px;height:46px;"></div>
<span id="t75" class="t " style="left:708.9px;top:657px;font-size:11px;line-height:13px;color:#000;letter-spacing:-0.132px;">Central Ações</span>
<div class="btn" style="left:781px;top:629px;width:57px;height:46px;"></div>
<span id="t76" class="t " style="left:788.3px;top:659px;font-size:11px;line-height:13px;color:#000;letter-spacing:-0.213px;transform:scaleX(0.9896);transform-origin:0 0;">Funções</span>
<div class="btn" style="left:840px;top:629px;width:46px;height:46px;"></div>
<span id="t77" class="t " style="left:847.3px;top:659px;font-size:11px;line-height:13px;color:#000;letter-spacing:-0.196px;transform:scaleX(0.9833);transform-origin:0 0;">Avisos</span>
<div class="btn" style="left:888px;top:629px;width:63px;height:46px;"></div>
<span id="t78" class="t " style="left:923.9px;top:647px;font-size:11px;line-height:13px;color:#000;letter-spacing:-0.216px;transform:scaleX(0.9041);transform-origin:0 0;">Sair</span>
<svg style="position:absolute;left:160px;top:636px" width="16" height="16" viewBox="0 0 16 16">
<defs><linearGradient id="fl" x1="0" y1="0" x2="1" y2="0"><stop offset="0" stop-color="#3c3f86"/><stop offset=".2" stop-color="#6a6eb8"/><stop offset=".8" stop-color="#5558a4"/><stop offset="1" stop-color="#34367a"/></linearGradient>
<linearGradient id="fl2" x1="0" y1="0" x2="0" y2="1"><stop offset="0" stop-color="#ffffff"/><stop offset="1" stop-color="#cfcfcf"/></linearGradient></defs>
<path d="M1.5 .5 H14 L15.5 2 V15.5 H.5 V1.5 Z" fill="url(#fl)" stroke="#33357a" stroke-width=".6"/>
<rect x="4.4" y=".8" width="8.8" height="5.4" fill="#e9e9f0"/>
<rect x="9.2" y="1.8" width="2.2" height="3.4" fill="#4f5299"/>
<rect x="3" y="7.8" width="10.6" height="7.6" fill="url(#fl2)"/>
</svg>
<svg style="position:absolute;left:290px;top:635px" width="18" height="18" viewBox="0 0 18 18">
<defs><linearGradient id="db" x1="0" y1="0" x2="1" y2="0"><stop offset="0" stop-color="#8ea9c6"/><stop offset=".3" stop-color="#f4f8fc"/><stop offset=".6" stop-color="#c9d6e4"/><stop offset="1" stop-color="#9db2ca"/></linearGradient></defs>
<rect x="1.5" y="1.5" width="13" height="5.2" rx="1.4" fill="url(#db)" stroke="#41658c" stroke-width="1"/>
<rect x="1.5" y="6.7" width="13" height="5.2" rx="1.4" fill="url(#db)" stroke="#41658c" stroke-width="1"/>
<rect x="1.5" y="11.9" width="13" height="5.2" rx="1.4" fill="url(#db)" stroke="#41658c" stroke-width="1"/>
<path d="M9.8 5 C11.6 3.6 13.8 4.6 14.6 7.4" fill="none" stroke="#8fe04a" stroke-width="2"/>
<path d="M8.4 5.2 L11.6 2.6 L11.8 7.2 Z" fill="#a6ee5a"/>
<path d="M6.4 9.6 C7 13 10 14.6 12.6 13.6" fill="none" stroke="#4fc934" stroke-width="2"/>
<path d="M15.8 13.6 L12.2 16.4 L12 11.2 Z" fill="#93e64c"/>
</svg>
<svg style="position:absolute;left:734px;top:637px" width="18" height="15" viewBox="0 0 18 15">
<path d="M2.8 8 L7 12 L15.6 2.8" fill="none" stroke="#07c907" stroke-width="2.5"/></svg>
<svg style="position:absolute;left:800px;top:634px" width="20" height="20" viewBox="0 0 20 20">
<defs><linearGradient id="tri" x1="0" y1="0" x2="1" y2="1"><stop offset="0" stop-color="#2452dc"/><stop offset="1" stop-color="#5f97f5"/></linearGradient></defs>
<rect x="0" y="0" width="20" height="20" fill="#f0f0eb"/>
<path d="M2.2 2 L2.2 12.6 L12.8 12.6 Z" fill="url(#tri)" stroke="#1d46c6" stroke-width=".8"/>
<path d="M3.8 7 L3.8 11.2 L8 11.2 Z" fill="#7fb0fa"/>
<circle cx="5.5" cy="9.6" r=".9" fill="#fff"/>
<rect x="3" y="13" width="14.8" height="3.9" fill="#d3920c"/>
<rect x="4" y="13.8" width="12.8" height="1.8" fill="#f9c64c"/>
<path d="M5 13.8 V15 M6.6 13.8 V15 M8.2 13.8 V15 M9.8 13.8 V15 M11.4 13.8 V15 M13 13.8 V15 M14.6 13.8 V15 M16.2 13.8 V15" stroke="#fff7da" stroke-width=".7"/>
<path d="M10.6 10.4 L16 4.2" stroke="#1b1b1b" stroke-width="3.4"/>
<path d="M10.2 9.8 L15.6 3.8" stroke="#f2d860" stroke-width="2.5"/>
<path d="M15.4 4 L16.9 2.5" stroke="#d8806c" stroke-width="3" stroke-linecap="round"/>
<path d="M8.6 11.2 L9.3 8.7 L11.4 10.5 Z" fill="#fff" stroke="#222" stroke-width=".5"/>
<path d="M8.6 11.2 L9 10.1 L9.8 10.8 Z" fill="#111"/>
</svg>
<svg style="position:absolute;left:852px;top:633px" width="22" height="22" viewBox="0 0 22 22">
<defs><linearGradient id="cf" x1="0" y1="0" x2="0" y2="1"><stop offset="0" stop-color="#ffffff"/><stop offset="1" stop-color="#dbe6ee"/></linearGradient>
<filter id="hl" x="-20%" y="-20%" width="140%" height="140%"><feGaussianBlur stdDeviation=".8"/></filter></defs>
<circle cx="11.2" cy="10.8" r="9.6" fill="#fff" opacity=".7" filter="url(#hl)"/>
<circle cx="4" cy="5.2" r="3.2" fill="#a9e2f7"/>
<circle cx="18.4" cy="5.2" r="3.2" fill="#a9e2f7"/>
<path d="M5 17 L3.8 19.6 H18.6 L17.4 17 Q11.2 20.6 5 17 Z" fill="#0d4a86"/>
<circle cx="11.2" cy="10.8" r="7.3" fill="url(#cf)" stroke="#1a7dc2" stroke-width="2.2"/>
<path d="M8.2 8.2 L11 10.6 L7.6 11.8" fill="none" stroke="#1b3a66" stroke-width="1.3"/>
<path d="M11 10.6 L15.6 9.4" stroke="#e0504a" stroke-width=".9"/>
</svg>
<svg style="position:absolute;left:896px;top:640px" width="25" height="24" viewBox="0 0 25 24">
<defs><linearGradient id="dr" x1="0" y1="0" x2="1" y2="0"><stop offset="0" stop-color="#d2d2d2"/><stop offset="1" stop-color="#7e8080"/></linearGradient>
<linearGradient id="dk" x1="0" y1="0" x2="0" y2="1"><stop offset="0" stop-color="#2b3232"/><stop offset=".82" stop-color="#3a4238"/><stop offset=".86" stop-color="#5f6d2a"/><stop offset="1" stop-color="#6c7b30"/></linearGradient></defs>
<rect x="7.8" y="1.2" width="16.2" height="21.6" fill="#262c2c"/>
<rect x="9" y="2.2" width="14" height="19.6" fill="url(#dk)"/>
<path d="M9 2.2 L17.6 2.2 L17.6 18.4 L9 21.8 Z" fill="url(#dr)"/>
<circle cx="15.6" cy="10.2" r=".9" fill="#f4f4f4"/>
<path d="M1.4 10.2 H6 V6.4 L11.8 12.4 L6 18.4 V14.6 H1.4 Z" fill="#e8303e" stroke="#bd0c1a" stroke-width="1.2"/>
</svg>
<div style="position:absolute;left:5px;top:677px;width:948px;height:19px;background:#f0f0f0;"></div>
<span id="t79" class="t " style="left:6px;top:681px;font-size:12px;line-height:14px;color:#000;letter-spacing:-0.062px;transform:scaleX(0.9400);transform-origin:0 0;-webkit-text-stroke:.3px #000;">v:6.03.21-0855</span>
<span id="t80" class="t " style="left:90px;top:681px;font-size:12px;line-height:14px;color:#000;letter-spacing:-0.207px;transform:scaleX(0.9400);transform-origin:0 0;-webkit-text-stroke:.3px #000;">Total Reg.: 1</span>
<span id="t81" class="t " style="left:238px;top:681px;font-size:12px;line-height:14px;color:#000;letter-spacing:0.040px;transform:scaleX(0.9400);transform-origin:0 0;-webkit-text-stroke:.3px #000;">Estado de Edição</span>
<span id="t82" class="t " style="left:438px;top:681px;font-size:12px;line-height:14px;color:#000;letter-spacing:0.151px;transform:scaleX(0.9400);transform-origin:0 0;-webkit-text-stroke:.3px #000;">Nº Registro: 1</span>
<div style="position:absolute;left:233px;top:679px;width:1px;height:16px;background:#d7d7d7;"></div>
<div style="position:absolute;left:433px;top:679px;width:1px;height:16px;background:#d7d7d7;"></div>
<div style="position:absolute;left:949px;top:686px;width:2px;height:2px;background:#bfbfbf;"></div>
<div style="position:absolute;left:946px;top:689px;width:2px;height:2px;background:#bfbfbf;"></div>
<div style="position:absolute;left:949px;top:689px;width:2px;height:2px;background:#bfbfbf;"></div>
<div style="position:absolute;left:943px;top:692px;width:2px;height:2px;background:#bfbfbf;"></div>
<div style="position:absolute;left:946px;top:692px;width:2px;height:2px;background:#bfbfbf;"></div>
<div style="position:absolute;left:949px;top:692px;width:2px;height:2px;background:#bfbfbf;"></div>
</body></html>
